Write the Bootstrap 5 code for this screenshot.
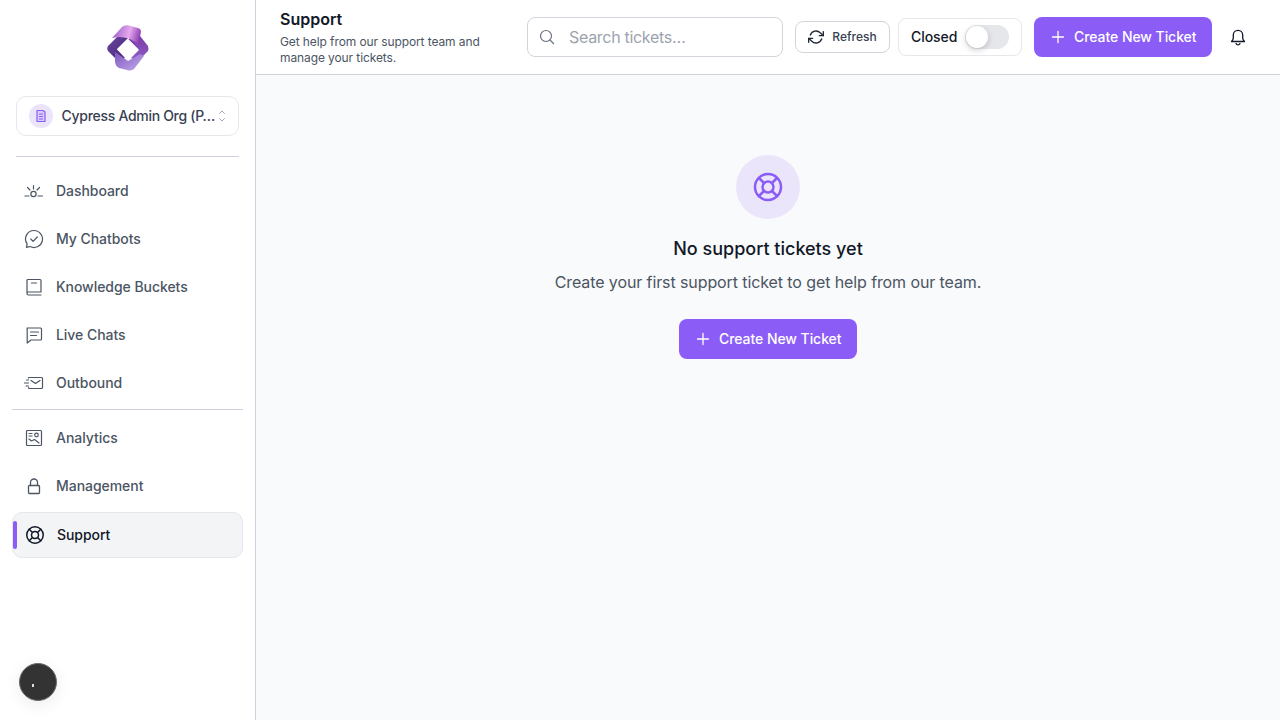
<!DOCTYPE html>
<html lang="en">
<head>
    <meta charset="UTF-8">
    <meta name="viewport" content="width=device-width, initial-scale=1.0">
    <title>Support</title>
    <link rel="stylesheet" href="https://cdn.jsdelivr.net/npm/bootstrap@5.3.0/dist/css/bootstrap.min.css">
    <style>
        html, body { height: 100%; overflow: hidden; }
        body { font-family: Inter, "Liberation Sans", sans-serif; background: #f9fafb; color: #111827; }
        svg { display: block; flex: none; fill: none; stroke: currentColor; stroke-linecap: round; stroke-linejoin: round; }
        .app-shell { height: 720px; }
        .lift-label { padding-bottom: 2px; }
        .side-panel { width: 256px; flex: none; background: #fff; border-right: 1px solid #d1d1db; padding: 25px 12px 0; position: relative; }
        .logo-box { height: 71px; }
        .org-switch { margin: 0 4px; height: 40px; border: 1px solid #e5e7eb; border-radius: 10px; padding: 0 12px; font-size: 14px; font-weight: 500; color: #374151; letter-spacing: -.3px; }
        .org-icon { width: 24px; height: 24px; border-radius: 50%; background: #ebe5fb; color: #8b5cf6; }
        .org-name { width: 154px; margin-left: 1px; white-space: nowrap; }
        .org-chevrons { color: #9ca3af; margin-left: 3px; }
        .rule-top { height: 1px; background: #d1d1db; margin: 20px 4px 10px; }
        .rule-mid { height: 1px; background: #d1d1db; margin: 2px 0 4px; }
        .side-link { height: 48px; padding-left: 12px; gap: 12px; font-size: 14px; font-weight: 500; color: #4b5563; text-decoration: none; letter-spacing: -.05px; }
        .side-link svg { color: #4b5563; }
        .side-link.is-active { height: 46px; margin-top: 2px; color: #111827; background: #f3f4f6; border: 1px solid #e5e7eb; border-radius: 10px; position: relative; padding-left: 12px; }
        .side-link.is-active svg { color: #111827; }
        .active-bar { position: absolute; left: 0; top: 8px; width: 4px; height: 28px; background: #8b5cf6; border-radius: 2px; }
        .help-dot { position: absolute; left: 19px; top: 663px; width: 38px; height: 38px; border-radius: 50%; background: #333; border: 1px solid #6b6b6b; box-shadow: 0 4px 16px rgba(0,0,0,.08); }
        .help-dot span { position: absolute; left: 12px; top: 20px; width: 2px; height: 3px; background: #ddd; }
        .top-bar { height: 75px; background: #fff; border-bottom: 1px solid #d1d1db; padding: 0 24px; }
        .title-block { width: 247px; flex: none; margin-top: -2px; }
        .title-main { font-size: 16px; font-weight: 600; line-height: 24px; margin: 0 0 3px; color: #111827; }
        .title-sub { font-size: 12px; line-height: 16px; color: #4b5563; margin: 0; width: 215px; letter-spacing: -.1px; }
        .search-box { width: 256px; height: 40px; flex: none; position: relative; margin-right: 12px; }
        .search-box svg { position: absolute; left: 12px; top: 12px; color: #6b7280; }
        .search-box input { width: 100%; height: 100%; font-size: 16px; padding: 0 12px 0 41px; border: 1px solid #d1d5db; border-radius: 8px; box-shadow: none; color: #111827; letter-spacing: -.3px; }
        .search-box input::placeholder { color: #9ca3af; }
        .refresh-btn { width: 95px; height: 32px; flex: none; padding: 0; gap: 8px; font-size: 12px; font-weight: 500; color: #374151; background: #fff; border: 1px solid #d1d5db; border-radius: 8px; margin-right: 8px; }
        .closed-box { width: 124px; height: 38px; flex: none; padding: 0 12px; border: 1px solid #e5e7eb; border-radius: 8px; font-size: 14px; font-weight: 500; color: #111827; margin-right: 12px; gap: 8px; letter-spacing: -.05px; }
        .toggle-track { width: 44px; height: 24px; border-radius: 12px; background: #e5e7eb; position: relative; }
        .toggle-knob { position: absolute; left: 1px; top: 1px; width: 22px; height: 22px; border-radius: 50%; background: #fff; box-shadow: 0 2px 6px rgba(0,0,0,.2); }
        .violet-btn { height: 40px; width: 178px; padding: 0 16px; gap: 8px; font-size: 14px; font-weight: 500; color: #fff; background: #8b5cf6; border: 0; border-radius: 8px; white-space: nowrap; letter-spacing: -.06px; }
        .violet-btn:hover { background: #7c4fe6; color: #fff; }
        .bell-btn { margin-left: 18px; color: #111827; }
        .empty-wrap { padding-top: 80px; }
        .empty-icon { width: 64px; height: 64px; border-radius: 50%; background: #ebe5fb; color: #8b5cf6; margin-bottom: 16px; }
        .empty-title { font-size: 18px; font-weight: 500; line-height: 28px; margin: 0 0 7px; color: #111827; }
        .empty-text { font-size: 16px; line-height: 24px; color: #4b5563; margin: 0 0 25px; letter-spacing: -.1px; }
    </style>
</head>
<body>

<div class="app-shell d-flex">
    <!-- Sidebar -->
    <aside class="side-panel d-flex flex-column">
        <div class="logo-box d-flex justify-content-center">
            <svg width="42" height="46" viewBox="0 0 42 46" style="stroke:none">
                <defs>
                    <linearGradient id="lgTop" x1="0" y1="0.3" x2="1" y2="0.5"><stop offset="0" stop-color="#9a5cc6"/><stop offset=".6" stop-color="#e6a8f0"/><stop offset="1" stop-color="#8a3fb0"/></linearGradient>
                    <linearGradient id="lgLeft" x1="0" y1="0" x2="1" y2="1"><stop offset="0" stop-color="#6f449f"/><stop offset="1" stop-color="#3f2878"/></linearGradient>
                    <linearGradient id="lgRight" x1="0" y1="0" x2="0" y2="1"><stop offset="0" stop-color="#7a3aa8"/><stop offset="1" stop-color="#8e5ec8"/></linearGradient>
                    <linearGradient id="lgBot" x1="0" y1="0" x2="1" y2="1"><stop offset="0" stop-color="#7e55bd"/><stop offset="1" stop-color="#c4adee"/></linearGradient>
                </defs>
                <path d="M33 11 L41 21 Q42 24 41 26 L31 36 L24 33 L32 25 L21 14 Z" fill="url(#lgRight)"/>
                <path d="M1 21 L12 10 L21 13 L10 24 L18 33 L11 36 L1 26 Q-.5 23.500 1 21 Z" fill="url(#lgLeft)"/>
                <path d="M5 13 L15 2 Q18 -.5 22 .5 L31 3 Q35 4 33.500 9 L32 19 L21 13 L12 12 Z" fill="url(#lgTop)"/>
                <path d="M8 27 L21 36 L33 29 L37 31 L27 44 Q23 46.500 20 45 L12 43 Q8 41 8 36 Z" fill="url(#lgBot)"/>
                <path d="M21 14 L31.500 24.500 L21 35 L10 24.500 Z" fill="#fff"/>
            </svg>
        </div>
        <div class="org-switch d-flex align-items-center">
            <span class="org-icon d-flex align-items-center justify-content-center me-2">
                <svg width="12" height="14" viewBox="0 0 12 14" stroke-width="1.2"><path d="M2 1.500h6l2 1.500v9.500H2z" fill="#d9cdfa"/><path d="M4.500 5h3M4.500 7.500h3M4.500 10h3"/></svg>
            </span>
            <span class="org-name lift-label">Cypress Admin Org (P…</span>
            <svg class="org-chevrons" width="8" height="14" viewBox="0 0 8 14" stroke-width=".9"><path d="M1.500 4.500L4 2l2.500 2.500M1.500 9.500L4 12l2.500-2.500"/></svg>
        </div>
        <div class="rule-top"></div>
        <a href="#" class="side-link d-flex align-items-center">
            <svg width="20" height="20" viewBox="0 0 20 20" stroke-width="1.200"><circle cx="9.500" cy="13" r="2.600"/><path d="M9.500 4.500v3.500M3.500 6.500l2.500 2.500M15.500 6.500l-2.500 2.500M1 15h4M14 15h4.500"/></svg>
            <span class="lift-label">Dashboard</span>
        </a>
        <a href="#" class="side-link d-flex align-items-center">
            <svg width="20" height="20" viewBox="0 0 20 20" stroke-width="1.200"><path d="M10 1.500a8.500 8.500 0 1 1-4 16l-3.500.8.600-3.400A8.500 8.500 0 0 1 10 1.500z"/><path d="M6.800 10l2.300 2.300 4.200-4.300"/></svg>
            <span class="lift-label">My Chatbots</span>
        </a>
        <a href="#" class="side-link d-flex align-items-center">
            <svg width="20" height="20" viewBox="0 0 20 20" stroke-width="1.200"><path d="M3 15.500V3.500a1 1 0 0 1 1-1h12a1 1 0 0 1 1 1V15H4.500A1.500 1.500 0 0 0 3 16.500 1.500 1.500 0 0 0 4.500 18H17"/><path d="M7.500 6h5"/></svg>
            <span class="lift-label">Knowledge Buckets</span>
        </a>
        <a href="#" class="side-link d-flex align-items-center">
            <svg width="20" height="20" viewBox="0 0 20 20" stroke-width="1.200"><path d="M3 3h13.500a1 1 0 0 1 1 1v10a1 1 0 0 1-1 1H7l-3.800 3V4z"/><path d="M6.500 7h8M6.500 10.500h6"/></svg>
            <span class="lift-label">Live Chats</span>
        </a>
        <a href="#" class="side-link d-flex align-items-center">
            <svg width="20" height="20" viewBox="0 0 20 20" stroke-width="1.200"><path d="M4.500 5V4.500h13a1 1 0 0 1 1 1v9a1 1 0 0 1-1 1h-12a1 1 0 0 1-1-1"/><path d="M7 7.500l4.500 3 4.500-3M2.500 7h2M.5 10h4M2 13h2.500"/></svg>
            <span class="lift-label">Outbound</span>
        </a>
        <div class="rule-mid"></div>
        <a href="#" class="side-link d-flex align-items-center">
            <svg width="20" height="20" viewBox="0 0 20 20" stroke-width="1.200"><rect x="2.500" y="2.500" width="15" height="15" rx="1"/><circle cx="12.500" cy="7" r="1.800"/><path d="M5 5.500h3M5 8h3M5 11l2.500 2 3-1.500 4.500 3.500"/></svg>
            <span class="lift-label">Analytics</span>
        </a>
        <a href="#" class="side-link d-flex align-items-center">
            <svg width="20" height="20" viewBox="0 0 20 20" stroke-width="1.300"><rect x="4.500" y="9.500" width="11" height="8" rx="1"/><path d="M6.500 9.500V6.500a3.500 3.500 0 0 1 7 0v3"/></svg>
            <span class="lift-label">Management</span>
        </a>
        <a href="#" class="side-link is-active d-flex align-items-center">
            <span class="active-bar"></span>
            <svg width="20" height="20" viewBox="0 0 20 20" stroke-width="1.500"><circle cx="10" cy="10" r="8.250"/><circle cx="10" cy="10" r="3.500"/><path d="M4.200 4.200l3.300 3.300M15.800 4.200l-3.300 3.300M4.200 15.800l3.300-3.300M15.800 15.800l-3.300-3.300"/></svg>
            <span class="lift-label">Support</span>
        </a>
        <div class="help-dot"><span></span></div>
    </aside>

    <!-- Main -->
    <div class="flex-grow-1 d-flex flex-column">
        <header class="top-bar d-flex align-items-center">
            <div class="title-block">
                <h1 class="title-main">Support</h1>
                <p class="title-sub">Get help from our support team and manage your tickets.</p>
            </div>
            <div class="search-box">
                <svg width="16" height="16" viewBox="0 0 16 16" stroke-width="1.200"><circle cx="7" cy="7" r="5.500"/><path d="M11 11l3.500 3.500"/></svg>
                <input type="text" class="form-control" placeholder="Search tickets…">
            </div>
            <button type="button" class="btn refresh-btn d-flex align-items-center justify-content-center">
                <svg width="16" height="16" viewBox="0 0 24 24" stroke-width="2" style="color:#1f2937"><path d="M23 4v6h-6M1 20v-6h6"/><path d="M3.510 9a9 9 0 0 1 14.850-3.360L23 10M1 14l4.640 4.360A9 9 0 0 0 20.490 15"/></svg>
                <span>Refresh</span>
            </button>
            <div class="closed-box d-flex align-items-center">
                <span class="lift-label">Closed</span>
                <span class="toggle-track"><span class="toggle-knob"></span></span>
            </div>
            <button type="button" class="btn violet-btn d-flex align-items-center">
                <svg width="16" height="16" viewBox="0 0 16 16" stroke-width="1.300"><path d="M8 2.500v11M2.500 8h11"/></svg>
                <span class="lift-label">Create New Ticket</span>
            </button>
            <div class="bell-btn">
                <svg width="16" height="18" viewBox="0 0 16 18" stroke-width="1.300"><path d="M1.500 13.500c1-1 1.800-1.800 1.800-3.500V7a4.700 4.700 0 0 1 9.400 0v3c0 1.700.8 2.500 1.800 3.500z"/><path d="M6 15.500a2.200 2.200 0 0 0 4 0"/></svg>
            </div>
        </header>
        <main class="empty-wrap d-flex flex-column align-items-center text-center">
            <div class="empty-icon d-flex align-items-center justify-content-center">
                <svg width="32" height="32" viewBox="0 0 32 32" stroke-width="2.500"><circle cx="16" cy="16" r="13"/><circle cx="16" cy="16" r="5.500"/><path d="M7 7l5 5M25 7l-5 5M7 25l5-5M25 25l-5-5"/></svg>
            </div>
            <h2 class="empty-title">No support tickets yet</h2>
            <p class="empty-text">Create your first support ticket to get help from our team.</p>
            <button type="button" class="btn violet-btn d-flex align-items-center">
                <svg width="16" height="16" viewBox="0 0 16 16" stroke-width="1.300"><path d="M8 2.500v11M2.500 8h11"/></svg>
                <span class="lift-label">Create New Ticket</span>
            </button>
        </main>
    </div>
</div>

<script src="https://cdn.jsdelivr.net/npm/bootstrap@5.3.0/dist/js/bootstrap.bundle.min.js"></script>
</body>
</html>
